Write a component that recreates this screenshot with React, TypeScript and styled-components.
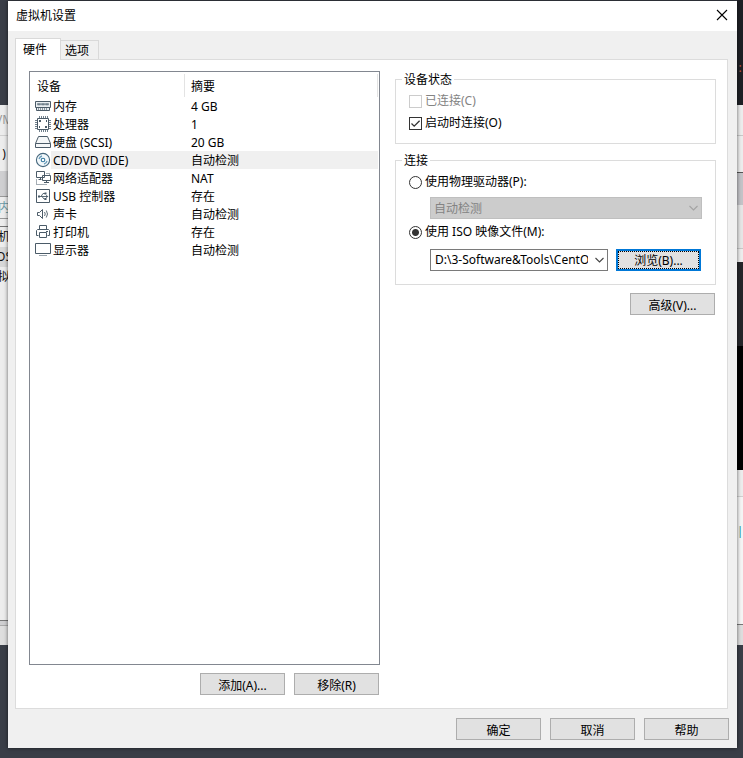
import React, { useState } from "react";
import styled, { createGlobalStyle, css } from "styled-components";

const GlobalStyle = createGlobalStyle`
  *, *::before, *::after { box-sizing: border-box; }
  body {
    margin: 0;
    background: #3a3e47;
    color: #000;
    font: 12px/16px "Noto Sans", "Noto Sans CJK SC", sans-serif;
  }
  button, select, input { font: inherit; color: inherit; margin: 0; }
`;

const Desktop = styled.div`
  display: grid;
  grid-template-columns: 8px minmax(0, 1fr) 6px;
  min-height: 100vh;
`;

const Edge = styled.div`
  display: flex;
  flex-direction: column;
  min-width: 0;
  overflow: hidden;
`;

const Strip = styled.div<{ $h: number; $bg: string; $line?: string; $color?: string }>`
  display: flex;
  align-items: center;
  justify-content: center;
  flex: none;
  height: ${(p) => p.$h}px;
  background: ${(p) => p.$bg};
  color: ${(p) => p.$color ?? "#111"};
  border-bottom: ${(p) => (p.$line ? `1px solid ${p.$line}` : "0")};
  overflow: hidden;
  white-space: nowrap;
`;

const Dialog = styled.main`
  display: flex;
  flex-direction: column;
  margin: 1px 0 10px;
  background: #f0f0f0;
  box-shadow: 0 0 4px rgba(0, 0, 0, 0.6);
  position: relative;
`;

const TitleBar = styled.header`
  display: flex;
  align-items: center;
  justify-content: space-between;
  height: 30px;
  padding: 0 8px;
  background: #fff;
`;

const Title = styled.h1`
  margin: 0;
  font: inherit;
`;

const CloseButton = styled.button`
  display: flex;
  padding: 0 1px 2px;
  border: 0;
  background: none;
`;

const Tabs = styled.div`
  display: flex;
  align-items: flex-end;
  height: 28px;
  padding: 0 7px;
`;

const Tab = styled.button<{ $active: boolean }>`
  border: 1px solid #d9d9d9;
  border-bottom: 0;
  background: #f0f0f0;
  height: 19px;
  padding: 2px 9px 0 4px;
  ${(p) =>
    p.$active &&
    css`
      position: relative;
      height: 22px;
      margin-bottom: -1px;
      padding: 0 13px 0 7px;
      background: #fff;
    `}
  & + & { border-left: 0; }
`;

const Panel = styled.section`
  flex: 1;
  display: grid;
  grid-template-columns: minmax(0, 351fr) minmax(0, 321fr);
  gap: 15px;
  margin: 0 9px 0 7px;
  padding: 11px 11px 13px 13px;
  border: 1px solid #dcdcdc;
  background: #fff;
`;

const Column = styled.div`
  display: flex;
  flex-direction: column;
  gap: 8px;
`;

const DeviceFrame = styled.div`
  flex: 1;
  border: 1px solid #828790;
  background: #fff;
`;

const DeviceTable = styled.table`
  width: 100%;
  table-layout: fixed;
  border-collapse: collapse;
`;

const HeadCell = styled.th<{ $width?: string }>`
  width: ${(p) => p.$width ?? "auto"};
  height: 25px;
  padding: 5px 0 0 ${(p) => (p.$width ? 7 : 6)}px;
  font-weight: 400;
  text-align: left;
  background: linear-gradient(#e3e3e3, #e3e3e3) right ${(p) => (p.$width ? 0 : 1)}px bottom 0 / 1px 23px no-repeat;
`;

const DeviceCell = styled.td`
  height: 18px;
  padding: 0 0 0 5px;
`;

const DeviceName = styled.div`
  display: flex;
  align-items: center;
  height: 18px;
`;

const Fill = styled.div<{ $selected: boolean; $summary?: boolean }>`
  flex: 1;
  height: 18px;
  line-height: 20px;
  padding-left: ${(p) => (p.$summary ? 6 : 2)}px;
  margin-right: ${(p) => (p.$summary ? 1 : 0)}px;
  white-space: nowrap;
  background: ${(p) => (p.$selected ? "#f0f0f0" : "transparent")};
`;

const SummaryCell = styled.td`
  height: 18px;
  padding: 0;
`;

const Icon = styled.svg`
  flex: none;
  display: block;
`;

const ButtonRow = styled.div<{ $pad?: string }>`
  display: flex;
  justify-content: flex-end;
  gap: 9px;
  padding: ${(p) => p.$pad ?? "0 1px 0 0"};
`;

const PushButton = styled.button<{ $focused?: boolean }>`
  flex: none;
  width: 85px;
  height: 22px;
  padding: 3px 0 0;
  border: 1px solid #adadad;
  background: #e1e1e1;
  line-height: 16px;
  ${(p) =>
    p.$focused &&
    css`
      padding: 2px 0 0;
      border: 2px solid #0078d7;
      outline: 1px dotted #000;
      outline-offset: -3px;
    `}
`;

const Group = styled.fieldset<{ $bottom: number }>`
  min-width: 0;
  margin: 0;
  padding: 3px 13px ${(p) => p.$bottom}px;
  border: 1px solid #dcdcdc;
`;

const Legend = styled.legend`
  margin-left: -7px;
  padding: 0 2px;
  height: 16px;
  line-height: 18px;
`;

const Option = styled.label<{ $disabled?: boolean }>`
  display: flex;
  align-items: center;
  gap: 3px;
  height: 22px;
  color: ${(p) => (p.$disabled ? "#838383" : "#000")};
`;

const CheckBox = styled.input.attrs({ type: "checkbox" })`
  appearance: none;
  flex: none;
  width: 13px;
  height: 13px;
  border: 1px solid #333;
  background: #fff;
  &:disabled { border-color: #ccc; }
  &:checked {
    background: #fff
      url("data:image/svg+xml,%3Csvg xmlns='http://www.w3.org/2000/svg' viewBox='0 0 11 11'%3E%3Cpath d='M1.5 5.5l2.7 2.7L9.6 2.7' fill='none' stroke='%23333' stroke-width='1.3'/%3E%3C/svg%3E")
      center / 11px 11px no-repeat;
  }
`;

const Radio = styled.input.attrs({ type: "radio" })`
  appearance: none;
  flex: none;
  width: 13px;
  height: 13px;
  border: 1px solid #333;
  border-radius: 50%;
  background: #fff;
  &:checked { background: radial-gradient(circle, #333 3px, #fff 4px); }
`;

const PathRow = styled.div`
  display: flex;
  gap: 8px;
  margin-top: 6px;
  padding: 0 1px 0 21px;
`;

const DriveRow = styled.div`
  display: flex;
  margin: 4px 0 2px;
  padding-left: 21px;
`;

const SelectWrap = styled.div`
  flex: 1;
  min-width: 0;
  display: grid;
  align-items: center;
  & > * { grid-area: 1 / 1; }
  & > svg { justify-self: end; margin-right: 3px; pointer-events: none; }
`;

const Select = styled.select`
  appearance: none;
  width: 100%;
  height: 22px;
  padding: 0 19px 0 4px;
  border: 1px solid #7a7a7a;
  border-radius: 0;
  background: #fff;
  &:disabled {
    padding: 2px 19px 0 3px;
    border-color: #bfbfbf;
    background: #ccc;
    color: #838383;
    opacity: 1;
  }
`;

const Chevron = ({ color }: { color: string }) => (
  <Icon width="11" height="8" viewBox="0 0 11 8" fill="none" stroke={color} strokeWidth="1.1">
    <path d="M1.5 2l4 4 4-4" />
  </Icon>
);

type Kind = "memory" | "cpu" | "disk" | "cd" | "net" | "usb" | "sound" | "printer" | "display";

const ink = "#4b5b68";

const drawings: Record<Kind, React.ReactNode> = {
  memory: (
    <>
      <path d="M.5 3.5h15v6h-1v3h-13v-3h-1z" fill="#e9eef1" stroke={ink} />
      <path d="M2.5 5.5h3v1.500h-3zM6.500 5.500h3v1.500h-3zM10.500 5.500h3v1.500h-3z" fill="#71808c" stroke="#71808c" strokeWidth=".6" />
      <path d="M1 9.500h14" stroke={ink} />
      <path d="M3.500 10v2M5.500 10v2M7.500 10v2M9.500 10v2M11.500 10v2" stroke="#8b97a1" />
    </>
  ),
  cpu: (
    <>
      <path d="M2.5 2.5h11v11h-11z" stroke={ink} />
      <path d="M4.5 0v2M6.5 0v2M8.5 0v2M10.5 0v2M12.5 0v2M4.5 14v2M6.5 14v2M8.5 14v2M10.5 14v2M12.5 14v2M0 4.5h2M0 6.5h2M0 8.5h2M0 10.5h2M0 12.5h2M14 4.5h2M14 6.5h2M14 8.5h2M14 10.5h2M14 12.5h2" stroke="#71808c" />
      <path d="M4 4h2v2H4zM10 10h2v2h-2zM4 10h1v2H4zM11 4h1v2h-1z" fill={ink} />
    </>
  ),
  disk: (
    <>
      <path d="M3.5 2.5h9l3 7v4H.5v-4z" fill="#f5f7f8" stroke={ink} />
      <path d="M.5 9.5h15" stroke={ink} />
    </>
  ),
  cd: (
    <>
      <circle cx="8" cy="8" r="6.6" fill="#f2f8fb" stroke="#47687e" strokeWidth="1.1" />
      <circle cx="8" cy="8" r="1.8" fill="#fff" stroke="#35789f" strokeWidth="1.1" />
      <path d="M4 7A4.300 4.300 0 0 1 7 4M12 9A4.300 4.300 0 0 1 9 12" stroke="#6d9fbd" strokeWidth="1.3" />
    </>
  ),
  net: (
    <>
      <path d="M1.5 1.5h8v6h-8zM7.500 5.500h8v5h-8z" fill="#fff" stroke={ink} />
      <path d="M5.500 7.500v2M3.500 9.500h3M11.500 10.500v2M9 12.500h5" stroke={ink} />
      <path d="M1.500 9.500v5h10M11.500 3.500h3v2" stroke={ink} strokeDasharray="1 1" />
    </>
  ),
  usb: (
    <>
      <path d="M1.5 1.5h13v13h-13z" stroke={ink} />
      <path d="M4 8.5h8M6 8.5l2-3h2M7 8.5l2 2.5h1.500" stroke={ink} strokeWidth=".9" />
      <path d="M3 7.500h2v2H3zM9.500 4.500h2v2h-2zM9.500 10h2v2h-2zM11 7l2.500 1.500L11 10z" fill={ink} />
    </>
  ),
  sound: (
    <>
      <path d="M2.500 6.500h2l3-3v9l-3-3h-2z" stroke={ink} />
      <path d="M9.500 6q1.500 2 0 4M11.300 4.500q2.400 3.500 0 7" stroke={ink} strokeWidth=".9" />
    </>
  ),
  printer: (
    <>
      <path d="M4.500 5.500v-4h7v4M3.500 11.500h-2v-5l1-1h11l1 1v5h-2" stroke={ink} />
      <path d="M4.500 8.500h7v5h-7z" fill="#fff" stroke={ink} />
      <path d="M11 7.500h2" stroke={ink} />
    </>
  ),
  display: (
    <>
      <path d="M.5 1.500h15v10H.5z" fill="#fff" stroke={ink} />
      <path d="M4 13.500h8" stroke="#9aa4ac" />
    </>
  ),
};

const DeviceIcon = ({ kind }: { kind: Kind }) => (
  <Icon width="16" height="16" viewBox="0 0 16 16" fill="none" aria-hidden="true">
    {drawings[kind]}
  </Icon>
);

const devices: { kind: Kind; name: string; summary: string }[] = [
  { kind: "memory", name: "内存", summary: "4 GB" },
  { kind: "cpu", name: "处理器", summary: "1" },
  { kind: "disk", name: "硬盘 (SCSI)", summary: "20 GB" },
  { kind: "cd", name: "CD/DVD (IDE)", summary: "自动检测" },
  { kind: "net", name: "网络适配器", summary: "NAT" },
  { kind: "usb", name: "USB 控制器", summary: "存在" },
  { kind: "sound", name: "声卡", summary: "自动检测" },
  { kind: "printer", name: "打印机", summary: "存在" },
  { kind: "display", name: "显示器", summary: "自动检测" },
];

export default function App() {
  const [selected, setSelected] = useState<Kind>("cd");
  const [autoConnect, setAutoConnect] = useState(true);
  const [source, setSource] = useState("iso");

  return (
    <Desktop>
      <GlobalStyle />
      <Edge aria-hidden="true">
        <Strip $h={105} $bg="#3a3e47" />
        <Strip $h={31} $bg="#ededed" $line="#d0d0d0" $color="#999">VM</Strip>
        <Strip $h={35} $bg="#ededed">)</Strip>
        <Strip $h={26} $bg="#cfcfd1" $line="#999" />
        <Strip $h={22} $bg="#ededed" $line="#999" $color="#6b9aa6">内</Strip>
        <Strip $h={8} $bg="#ededed" $line="#777" />
        <Strip $h={20} $bg="#ededed">机</Strip>
        <Strip $h={20} $bg="#d8d8d8">OS</Strip>
        <Strip $h={20} $bg="#ededed">拟</Strip>
        <Strip $h={334} $bg="#ededed" $line="#777" />
        <Strip $h={5} $bg="#cfcfd1" $line="#aaa" />
        <Strip $h={19} $bg="#dedede" />
      </Edge>

      <Dialog>
        <TitleBar>
          <Title>虚拟机设置</Title>
          <CloseButton aria-label="关闭">
            <Icon width="12" height="12" viewBox="0 0 12 12" stroke="#000" strokeWidth="1.1">
              <path d="M1 1l10 10M11 1L1 11" />
            </Icon>
          </CloseButton>
        </TitleBar>

        <Tabs role="tablist">
          <Tab role="tab" aria-selected="true" $active>硬件</Tab>
          <Tab role="tab" aria-selected="false" $active={false}>选项</Tab>
        </Tabs>

        <Panel role="tabpanel">
          <Column>
            <DeviceFrame>
              <DeviceTable>
                <thead>
                  <tr>
                    <HeadCell $width="155px">设备</HeadCell>
                    <HeadCell>摘要</HeadCell>
                  </tr>
                </thead>
                <tbody>
                  {devices.map((d) => (
                    <tr key={d.kind} onClick={() => setSelected(d.kind)}>
                      <DeviceCell>
                        <DeviceName>
                          <DeviceIcon kind={d.kind} />
                          <Fill $selected={d.kind === selected}>{d.name}</Fill>
                        </DeviceName>
                      </DeviceCell>
                      <SummaryCell>
                        <Fill $summary $selected={d.kind === selected}>{d.summary}</Fill>
                      </SummaryCell>
                    </tr>
                  ))}
                </tbody>
              </DeviceTable>
            </DeviceFrame>
            <ButtonRow>
              <PushButton>添加(A)...</PushButton>
              <PushButton>移除(R)</PushButton>
            </ButtonRow>
          </Column>

          <Column>
            <Group $bottom={9}>
              <Legend>设备状态</Legend>
              <Option $disabled>
                <CheckBox disabled />
                已连接(C)
              </Option>
              <Option>
                <CheckBox checked={autoConnect} onChange={(e) => setAutoConnect(e.target.checked)} />
                启动时连接(O)
              </Option>
            </Group>

            <Group $bottom={13}>
              <Legend>连接</Legend>
              <Option>
                <Radio name="source" checked={source === "drive"} onChange={() => setSource("drive")} />
                使用物理驱动器(P):
              </Option>
              <DriveRow>
                <SelectWrap>
                  <Select aria-label="物理驱动器" disabled={source !== "drive"}>
                    <option>自动检测</option>
                  </Select>
                  <Chevron color="#a3a3a3" />
                </SelectWrap>
              </DriveRow>
              <Option>
                <Radio name="source" checked={source === "iso"} onChange={() => setSource("iso")} />
                使用 ISO 映像文件(M):
              </Option>
              <PathRow>
                <SelectWrap>
                  <Select aria-label="ISO 映像文件">
                    <option>D:\3-Software&amp;Tools\CentOS</option>
                  </Select>
                  <Chevron color="#444" />
                </SelectWrap>
                <PushButton $focused>浏览(B)...</PushButton>
              </PathRow>
            </Group>
            <ButtonRow>
              <PushButton>高级(V)...</PushButton>
            </ButtonRow>
          </Column>
        </Panel>

        <ButtonRow $pad="9px 8px 8px">
          <PushButton>确定</PushButton>
          <PushButton>取消</PushButton>
          <PushButton>帮助</PushButton>
        </ButtonRow>
      </Dialog>

      <Edge aria-hidden="true">
        <Strip $h={63} $bg="#1e2025" />
        <Strip $h={10} $bg="#1e2025" $color="#c0533f">:</Strip>
        <Strip $h={32} $bg="#1e2025" />
        <Strip $h={31} $bg="#ededed" $line="#c8c8c8" />
        <Strip $h={37} $bg="#ededed" $line="#555" />
        <Strip $h={32} $bg="#c4c4c8" />
        <Strip $h={44} $bg="#e6e6e6" $line="#c8c8c8" />
        <Strip $h={13} $bg="#ededed" />
        <Strip $h={84} $bg="#25262a" />
        <Strip $h={124} $bg="#000" />
        <Strip $h={27} $bg="#ededed" $line="#d0d0d0" />
        <Strip $h={29} $bg="#f5f5f5" />
        <Strip $h={12} $bg="#f5f5f5" $color="#2a9aa0">|</Strip>
        <Strip $h={87} $bg="#f5f5f5" $line="#777" />
        <Strip $h={20} $bg="#dedede" />
      </Edge>
    </Desktop>
  );
}
